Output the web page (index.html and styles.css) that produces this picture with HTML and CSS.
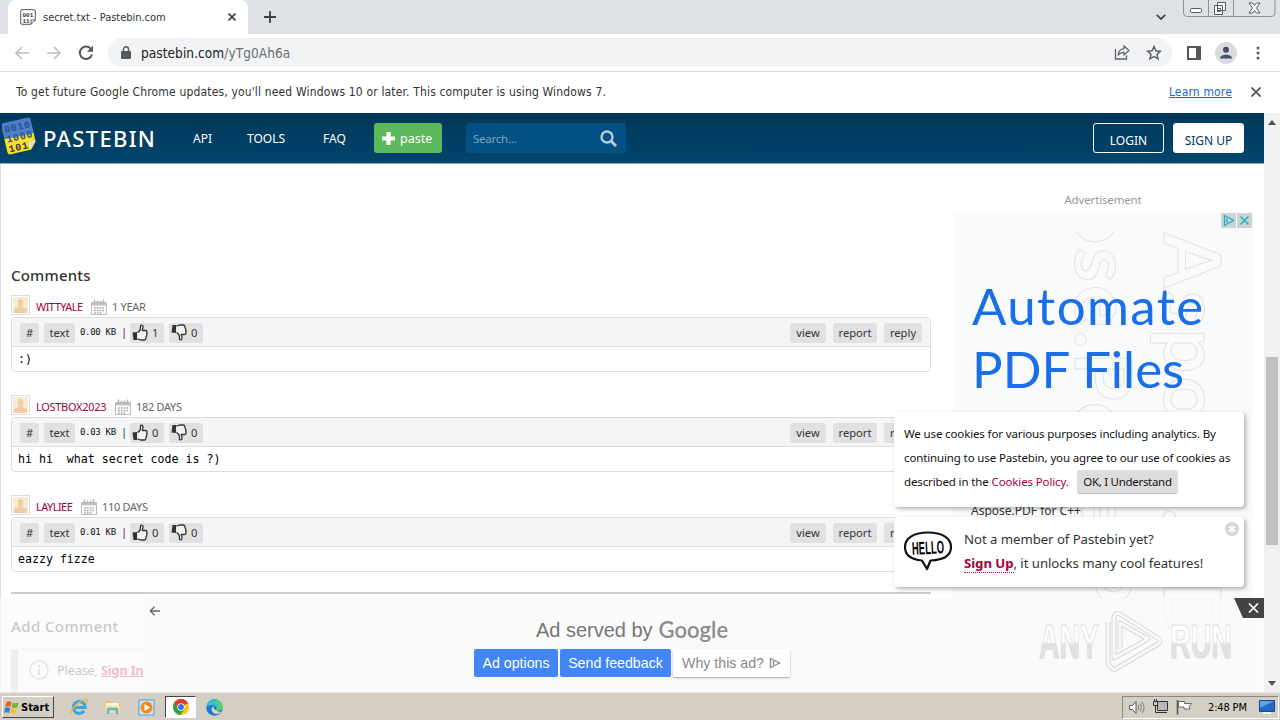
FILE: index.html
```
<!DOCTYPE html>
<html lang="en">
  <head>
    <meta charset="UTF-8" />
    <meta name="viewport" content="width=device-width, initial-scale=1.0" />
    <title>secret.txt - Pastebin.com</title>
    <link rel="stylesheet" href="styles.css">
  </head>
  <body>
    <!-- shared icons -->
    <svg class="defs" width="0" height="0">
      <symbol id="i-user" viewBox="0 0 20 20">
        <rect x=".5" y=".5" width="18" height="19" fill="#fff" stroke="#ddd" />
        <rect x="2" y="2" width="15" height="16" fill="#f9ead8" />
        <path d="M9.5 4c-3 0-3.300 3-2.200 5.500L7.800 12 3 14v4h13v-4l-4.500-2 .3-2.500C13 7 12.500 4 9.500 4z" fill="#efcfa2" />
      </symbol>
      <symbol id="i-cal" viewBox="0 0 16 16">
        <path d="M.5 3.500h15v12H.5z" fill="#fff" stroke="#bbb" />
        <path d="M1 4h14v2.500H1z" fill="#c4c4c4" />
        <path d="M3.500.5v5M6.500 1.500v3M9.500 1.500v3M12.500.5v5" stroke="#b5b5b5" stroke-width="1.500" />
        <path d="M3 9h10M3 11.500h10M3 14h8" stroke="#aaa" stroke-width="1.300" stroke-dasharray="1.800 1" />
      </symbol>
      <symbol id="i-up" viewBox="0 0 16 17">
        <path d="M.5 8.500 5 8v8H1.500z" fill="#333" />
        <path d="M5.500 8.500C7.500 7.500 8.500 6 8.500 4V2c0-1.300 2.200-1.300 2.500.3.200 1.500-.4 3-.8 4.200h3.300c1.700 0 1.800 1.500 1.200 2.300.5.800.3 1.700-.2 2.200.4.800.1 1.600-.5 2 .2 1.500-.5 3-2 3H8.500l-3-1.200" fill="#f2f2f2" stroke="#333" stroke-width="1.300" stroke-linejoin="round" />
      </symbol>
    </svg>

    <div class="tabstrip">
      <div class="tab">
        <svg width="16" height="16" viewBox="0 0 16 16">
          <path d="M2 .7h12q1.300 0 1.300 1.300v9L11 15.300H2Q.7 15.300.7 14V2Q.7.7 2 .7zM15 11h-4v4" fill="#fff" stroke="#555" />
          <text x="2.500" y="7.500" class="fav-text">001</text>
          <text x="2.500" y="14" class="fav-text">11</text>
        </svg>
        <span class="tab-title">secret.txt - Pastebin.com</span>
        <svg class="tab-close" width="8" height="8" viewBox="0 0 8 8"><path d="M.5.5l7 7M7.500.5l-7 7" stroke="#3c4043" stroke-width="1.600" /></svg>
      </div>
      <svg class="new-tab" width="12" height="12" viewBox="0 0 12 12"><path d="M6 0v12M0 6h12" stroke="#3c4043" stroke-width="1.800" /></svg>
      <svg class="tab-search" width="10" height="6" viewBox="0 0 10 6"><path d="M.8.8 5 5 9.200.8" fill="none" stroke="#3c4043" stroke-width="1.700" /></svg>
      <svg class="win-buttons" width="93" height="17" viewBox="0 0 93 17">
        <path d="M.5 0v13q0 3.500 3.500 3.500h84.500q3.500 0 3.500-3.500V0M25.500 0v16M50.500 0v16" fill="none" stroke="#8d9198" />
        <rect x="7.500" y="8.500" width="11" height="4" rx="1" fill="#fff" stroke="#555a63" />
        <path d="M34.500 2.500h8v8h-8zM31.500 5.500h8v9h-8z" fill="#fff" stroke="#555a63" />
        <path d="M34.500 8.500h3v3h-3z" fill="none" stroke="#555a63" />
        <path d="M66 3h3.500l2 2.500L73.500 3H77l-3.500 5 3.500 5h-3.500l-2-2.500-2 2.500H66l3.500-5z" fill="#fff" stroke="#555a63" />
      </svg>
    </div>

    <div class="toolbar">
      <svg class="nav-icon" width="16" height="16" viewBox="0 0 16 16"><path d="M15 8H2M8 2 2 8l6 6" fill="none" stroke="#bdbfc2" stroke-width="1.700" /></svg>
      <svg class="nav-icon" width="16" height="16" viewBox="0 0 16 16"><path d="M1 8h13M8 2l6 6-6 6" fill="none" stroke="#bdbfc2" stroke-width="1.700" /></svg>
      <svg class="nav-icon" width="16" height="16" viewBox="0 0 16 16"><path d="M13.300 4.500A6.200 6.200 0 1 0 14 9.500" fill="none" stroke="#54585d" stroke-width="2" /><path d="M15 .8v6H9z" fill="#54585d" /></svg>
      <div class="omnibox">
        <svg width="10" height="13" viewBox="0 0 10 13"><path d="M1 5h8q1 0 1 1v6q0 1-1 1H1q-1 0-1-1V6q0-1 1-1z" fill="#54585d" /><path d="M2.500 5.500V3.300a2.500 2.500 0 0 1 5 0v2.200" fill="none" stroke="#54585d" stroke-width="1.400" /></svg>
        <span class="url">pastebin.com<span>/yTg0Ah6a</span></span>
        <svg class="share" width="16" height="15" viewBox="0 0 16 15"><path d="M1.500 4v10h11v-3.500" fill="none" stroke="#5f6368" stroke-width="1.300" /><path d="M10 1l5 4.500-5 4.500V7.300C7 7.300 5.500 8 4 10.500 4.300 6.500 6 4 10 3.600z" fill="none" stroke="#5f6368" stroke-width="1.200" /></svg>
        <svg width="16" height="16" viewBox="0 0 16 16"><path d="M8 1.500l1.900 4.300 4.600.4-3.500 3.100 1 4.600-4-2.400-4 2.400 1-4.600-3.500-3.100 4.600-.4z" fill="none" stroke="#54585d" stroke-width="1.400" /></svg>
      </div>
      <svg class="panel-icon" width="14" height="14" viewBox="0 0 14 14"><path d="M0 0h14v14H0z" fill="#54585d" /><path d="M2 2h7v10H2z" fill="#fff" /></svg>
      <svg class="avatar" width="22" height="22" viewBox="0 0 22 22"><circle cx="11" cy="11" r="11" fill="#dadce0" /><circle cx="11" cy="7.800" r="3" fill="#46506a" /><path d="M5 16.500c0-5 12-5 12 0z" fill="#46506a" /></svg>
      <svg width="4" height="14" viewBox="0 0 4 14"><circle cx="2" cy="2" r="1.500" fill="#54585d" /><circle cx="2" cy="7" r="1.500" fill="#54585d" /><circle cx="2" cy="12" r="1.500" fill="#54585d" /></svg>
    </div>

    <div class="infobar">
      <span class="info-text">To get future Google Chrome updates, you'll need Windows 10 or later. This computer is using Windows 7.</span>
      <a class="learn">Learn more</a>
      <svg width="10" height="10" viewBox="0 0 10 10"><path d="M.5.5l9 9M9.500.5l-9 9" stroke="#54585d" stroke-width="1.800" /></svg>
    </div>

    <div class="viewport">
      <div class="page">
        <header class="header">
          <svg class="logo" width="35" height="41" viewBox="0 0 35 41">
            <g transform="rotate(-13 17 20)">
              <path d="M5 4h24q3 0 3 3v14H2V7q0-3 3-3z" fill="#4b7fc9" />
              <path d="M2 20h30v9l-6 7H5q-3 0-3-3z" fill="#f7df2b" />
              <path d="M32 28l-7 8v-6q0-2 2-2z" fill="#dfe2e4" />
              <text x="4" y="14" class="logo-bits dim">0010</text>
              <text x="4" y="24" class="logo-bits dim">1000</text>
              <text x="4" y="34" class="logo-bits">101</text>
            </g>
          </svg>
          <span class="brand">PASTEBIN</span>
          <a class="nav-link nav-api">API</a>
          <a class="nav-link nav-tools">TOOLS</a>
          <a class="nav-link nav-faq">FAQ</a>
          <a class="btn-paste"><svg width="13" height="13" viewBox="0 0 13 13"><path d="M6.500 0v13M0 6.500h13" stroke="#fff" stroke-width="4.200" /></svg><span>paste</span></a>
          <div class="search">
            <span>Search...</span>
            <svg width="17" height="17" viewBox="0 0 17 17"><circle cx="7" cy="7" r="5.500" fill="none" stroke="#b5cfdf" stroke-width="2.300" /><path d="M11 11l5 5" stroke="#b5cfdf" stroke-width="2.800" /></svg>
          </div>
          <a class="btn-login">LOGIN</a>
          <a class="btn-signup">SIGN UP</a>
        </header>

        <div class="content">
          <main class="main">
            <h2 class="title">Comments</h2>

            <div class="comment">
              <div class="who"><svg width="20" height="20"><use href="#i-user" /></svg><a class="name n1">WITTYALE</a><svg class="cal" width="16" height="16"><use href="#i-cal" /></svg><span class="age">1 YEAR</span></div>
              <div class="box">
                <div class="bar">
                  <span class="tag hash">#</span><span class="tag lang">text</span><span class="size">0.00 KB</span><span class="sep">|</span>
                  <span class="tag vote"><svg width="16" height="17"><use href="#i-up" /></svg>1</span>
                  <span class="tag vote"><svg class="down" width="16" height="17"><use href="#i-up" /></svg>0</span>
                  <span class="tag view">view</span><span class="tag report">report</span><span class="tag reply">reply</span>
                </div>
                <div class="code">:)</div>
              </div>
            </div>

            <div class="comment">
              <div class="who"><svg width="20" height="20"><use href="#i-user" /></svg><a class="name n2">LOSTBOX2023</a><svg class="cal" width="16" height="16"><use href="#i-cal" /></svg><span class="age">182 DAYS</span></div>
              <div class="box">
                <div class="bar">
                  <span class="tag hash">#</span><span class="tag lang">text</span><span class="size">0.03 KB</span><span class="sep">|</span>
                  <span class="tag vote"><svg width="16" height="17"><use href="#i-up" /></svg>0</span>
                  <span class="tag vote"><svg class="down" width="16" height="17"><use href="#i-up" /></svg>0</span>
                  <span class="tag view">view</span><span class="tag report">report</span><span class="tag reply">reply</span>
                </div>
                <div class="code">hi hi  what secret code is ?)</div>
              </div>
            </div>

            <div class="comment">
              <div class="who"><svg width="20" height="20"><use href="#i-user" /></svg><a class="name n3">LAYLIEE</a><svg class="cal" width="16" height="16"><use href="#i-cal" /></svg><span class="age">110 DAYS</span></div>
              <div class="box">
                <div class="bar">
                  <span class="tag hash">#</span><span class="tag lang">text</span><span class="size">0.01 KB</span><span class="sep">|</span>
                  <span class="tag vote"><svg width="16" height="17"><use href="#i-up" /></svg>0</span>
                  <span class="tag vote"><svg class="down" width="16" height="17"><use href="#i-up" /></svg>0</span>
                  <span class="tag view">view</span><span class="tag report">report</span><span class="tag reply">reply</span>
                </div>
                <div class="code">eazzy fizze</div>
              </div>
            </div>

            <h2 class="title add">Add Comment</h2>
            <div class="notice">
              <svg width="20" height="20" viewBox="0 0 20 20"><circle cx="10" cy="10" r="9" fill="none" stroke="#aaa" stroke-width="1.500" /><path d="M10 8.500V15M10 5v2" stroke="#999" stroke-width="2" /></svg>
              <span>Please, <a>Sign In</a></span>
            </div>
          </main>

          <aside class="side">
            <div class="side-label">Advertisement</div>
            <div class="ad">
              <svg class="ad-art" width="300" height="460" viewBox="0 0 300 460">
                <g class="outline">
                  <text transform="translate(211 20) rotate(90)">Aspose.PD</text>
                  <text transform="translate(122 -14) rotate(90)">ose.Pose.P</text>
                </g>
              </svg>
              <div class="ad-top"></div>
              <div class="ad-marks">
                <svg width="15" height="15" viewBox="0 0 15 15"><path d="M0 0h15v15H0z" fill="#cfd2d4" /><path d="M3.500 2.500v10l9-5zM6 5v5" fill="none" stroke="#1eb1c1" stroke-width="1.300" /></svg>
                <svg width="15" height="15" viewBox="0 0 15 15"><path d="M0 0h15v15H0z" fill="#cfd2d4" /><path d="M3.500 3.500l8 8M11.500 3.500l-8 8" stroke="#1eb1c1" stroke-width="1.600" /></svg>
              </div>
              <div class="ad-head"><span class="wide">Automate</span><br>PDF Files</div>
              <div class="ad-sub">Aspose.PDF for C++</div>
            </div>
          </aside>
        </div>

        <div class="popup cookies">
          <span class="c1">We use cookies for various purposes including analytics. By</span>
          <span class="c2">continuing to use Pastebin, you agree to our use of cookies as</span>
          <div class="c-row"><span class="c3">described in the <a>Cookies Policy</a>.</span><span class="btn-ok">OK, I Understand</span></div>
        </div>

        <div class="popup hello">
          <svg width="50" height="40" viewBox="0 0 50 40">
            <path d="M25 1.500C11 1.500 2 7 2 16c0 8 6 12.500 17 13.500L24 38l3.500-8.500C40 29 48 24.500 48 16 48 7 39 1.500 25 1.500z" fill="#fff" stroke="#111" stroke-width="2.200" stroke-linejoin="round" />
            <text x="9" y="23" class="hello-text" textLength="32" lengthAdjust="spacingAndGlyphs" transform="rotate(-3 25 18)">HELLO</text>
          </svg>
          <div class="hello-msg"><span class="h1">Not a member of Pastebin yet?</span><span class="h2"><a>Sign Up</a>, it unlocks many cool features!</span></div>
          <svg class="hello-x" width="14" height="14" viewBox="0 0 14 14"><circle cx="7" cy="7" r="7" fill="#d6d6d6" /><path d="M4.200 4.200l5.600 5.600M9.800 4.200 4.200 9.800" stroke="#fff" stroke-width="2" /></svg>
        </div>

        <div class="bottom-ad">
          <div class="ad-panel">
            <svg class="ad-back" width="11" height="10" viewBox="0 0 11 10"><path d="M11 5H1.500M5.500.8 1.300 5l4.200 4.200" fill="none" stroke="#666" stroke-width="1.300" /></svg>
            <div class="served"><span>Ad served by</span><b>Google</b></div>
            <div class="ad-buttons">
              <span class="ab opt">Ad options</span><span class="ab fb">Send feedback</span>
              <span class="ab why">Why this ad?<svg width="12" height="12" viewBox="0 0 12 12"><path d="M1.500 1.500v9L10.500 6zM4.500 4v4" fill="none" stroke="#888" stroke-width="1.300" /></svg></span>
            </div>
          </div>
          <svg class="ad-shut" width="30" height="20" viewBox="0 0 30 20"><path d="M0 0h30v20H9z" fill="#444" /><path d="M15 5.500l9 9M24 5.500l-9 9" stroke="#fff" stroke-width="1.700" /></svg>
        </div>

        <svg class="watermark" width="204" height="70" viewBox="0 0 204 70">
          <defs>
            <linearGradient id="wm" x1="0" y1="0" x2="0" y2="1">
              <stop offset=".5" stop-color="#fff" />
              <stop offset=".55" stop-color="#e2e2e2" />
            </linearGradient>
          </defs>
          <text x="4" y="52" textLength="60" lengthAdjust="spacingAndGlyphs">ANY</text>
          <text x="135" y="52" textLength="62" lengthAdjust="spacingAndGlyphs">RUN</text>
          <path d="M73 16v42l6 6 44-26q4-3 0-6L85 8q-6-2-6 4v40l34-19-28-16v26" fill="none" stroke="#d8d8d8" stroke-width="5" stroke-linejoin="round" />
          <path d="M73 16v42l6 6 44-26q4-3 0-6L85 8q-6-2-6 4v40l34-19-28-16v26" fill="none" stroke="#f8f8f8" stroke-width="3" stroke-linejoin="round" />
        </svg>
      </div>

      <div class="scrollbar">
        <svg width="8" height="5" viewBox="0 0 8 5"><path d="M4 0l4 5H0z" fill="#505050" /></svg>
        <div class="track"><div class="thumb"></div></div>
        <svg width="8" height="5" viewBox="0 0 8 5"><path d="M4 5l4-5H0z" fill="#505050" /></svg>
      </div>
    </div>

    <div class="taskbar">
      <div class="start">
        <svg width="16" height="15" viewBox="0 0 16 15"><path d="M2.500 2Q5 .5 7.500 2L6.500 7Q4 5.500 1.200 7z" fill="#e8622c" /><path d="M8.500 2.500q3 1.500 6 0l-1.200 5q-3 1.200-5.800 0z" fill="#79b82c" /><path d="M1 8q2.500-1.500 5.300 0L5 13Q2.500 11.500 0 13z" fill="#2c83d8" /><path d="M7.200 8.500q3 1.300 5.800 0l-1.200 4.700q-3 1.300-5.800 0z" fill="#f5c321" /></svg>
        <span>Start</span>
      </div>
      <svg class="t-ie" width="18" height="18" viewBox="0 0 18 18"><path d="M3.500 9.500h11.700A6 6 0 1 0 14 13" fill="none" stroke="#35a6e4" stroke-width="3" /><path d="M1 16C-1 12 14-1 17 2c1 1-.5 3-1 4" fill="none" stroke="#e6bd34" stroke-width="1.400" /></svg>
      <svg class="t-folder" width="17" height="16" viewBox="0 0 17 16"><path d="M1 2h6l1 2h8v10H1z" fill="#e9c45a" /><path d="M2 4h13v5H2z" fill="#fdf5cb" /><path d="M1 7h15v7H1z" fill="#f7dd83" /><path d="M4 15v-4q0-1 1-1h7q1 0 1 1v4" fill="none" stroke="#62b1e0" stroke-width="2.500" /></svg>
      <svg class="t-media" width="17" height="17" viewBox="0 0 17 17"><path d="M1 1h15v15H1z" fill="#cfe4f5" stroke="#529fcf" /><circle cx="8.500" cy="8.500" r="6" fill="#f28a18" /><path d="M6.500 5v7l5.500-3.500z" fill="#fff" /></svg>
      <div class="t-active">
        <svg width="16" height="16" viewBox="0 0 16 16"><circle cx="8" cy="8" r="8" fill="#fbc116" /><path d="M8 8 1.100 4A8 8 0 0 1 14.900 4z" fill="#e33b2e" /><path d="M8 8 1.100 4A8 8 0 0 0 7.500 16l4-6z" fill="#2ba24c" /><path d="M1.100 4 5 10l3-5.600h6.900A8 8 0 0 0 1.100 4z" fill="#e33b2e" /><circle cx="8" cy="8" r="3.700" fill="#fff" /><circle cx="8" cy="8" r="2.900" fill="#3478e5" /></svg>
      </div>
      <svg class="t-edge" width="17" height="17" viewBox="0 0 17 17"><circle cx="8.500" cy="8.500" r="8.200" fill="#1479cf" /><path d="M.5 8C1.500-2 16-2 16.700 8c.2 4-5 4.500-6.700 3 2-3-1-5.500-4-5-3 .3-5 1-5.500 2z" fill="#36bfd0" /><path d="M9 1c5-.5 8 4 7.700 7.500-.7 3-4.700 3.500-6.700 2.500 2-2 2-6-1-10z" fill="#5ccf72" /><path d="M10 11c-2-.5-3-2-2-4-4 1-3 8 3 8 2 0 4-1.500 4.500-2.500-2 .5-4 0-5.500-1.500z" fill="#d6d0c7" /></svg>
      <div class="tray">
        <svg width="17" height="15" viewBox="0 0 17 15"><path d="M1.500 5.500h3l3.500-4v12l-3.500-4h-3z" fill="#fff" stroke="#555" /><path d="M10 5q1.500 2.500 0 5M12 3.500q3 4 0 8M14 2q4.200 5.500 0 11" fill="none" stroke="#777" /></svg>
        <svg width="17" height="16" viewBox="0 0 17 16"><path d="M5.500 2.500h10v9h-10z" fill="#b8b8b8" stroke="#333" /><path d="M7 13.500h8M1.500 2.500h4v4h-4zM2.500 0v2M4.500 0v2M3.500 7v6.500h4" fill="none" stroke="#333" /></svg>
        <svg width="17" height="16" viewBox="0 0 17 16"><path d="M1.500 1v14.500" stroke="#555" stroke-width="1.600" /><path d="M2.500 2.500h6v2h7l-2.500 3 1 2.500H8V8H2.500z" fill="#fff" stroke="#666" /></svg>
        <span class="clock">2:48 PM</span>
        <svg class="desk" width="16" height="14" viewBox="0 0 16 14"><path d="M.5.5h15v11H.5z" fill="#2468c8" stroke="#234680" /><path d="M1 1h14L1 8z" fill="#5ba0ec" /><path d="M4 13h8" stroke="#fff" stroke-width="1.500" /></svg>
      </div>
    </div>
  </body>
</html>
```
FILE: styles.css
```
* {
  box-sizing: border-box;
}
body {
  margin: 0;
  width: 1280px;
  height: 720px;
  overflow: hidden;
  display: flex;
  flex-direction: column;
  background: #fff;
  font-family: "Noto Sans", sans-serif;
  color: #333;
  white-space: nowrap;
}
svg {
  flex: none;
  display: block;
}
.defs {
  position: absolute;
}

/* browser */
.tabstrip {
  height: 34px;
  flex: none;
  display: flex;
  background: #dee1e6;
  padding-left: 8px;
}
.tab {
  width: 240px;
  height: 34px;
  display: flex;
  align-items: center;
  background: #fff;
  border-radius: 8px 8px 0 0;
  padding: 0 12px;
}
.fav-text {
  font: bold 6px "Liberation Mono", monospace;
  fill: #333;
}
.tab-title {
  margin-left: 7px;
  font-family: "DejaVu Sans Condensed", "DejaVu Sans", sans-serif;
  font-stretch: condensed;
  font-size: 11px;
  letter-spacing: -0.03px;
}
.tab-close {
  margin-left: auto;
}
.new-tab {
  margin: 11px 0 0 16px;
}
.tab-search {
  margin: 14px 17px 0 auto;
}
.win-buttons {
  margin-right: 4px;
}
.toolbar {
  height: 38px;
  flex: none;
  display: flex;
  align-items: center;
  padding: 0 20px 0 14px;
  border-bottom: 1px solid #dadce0;
}
.nav-icon {
  margin-right: 16px;
}
.omnibox {
  width: 1064px;
  height: 29px;
  margin-left: -2px;
  display: flex;
  align-items: center;
  padding: 0 10px 0 13px;
  border-radius: 15px;
  background: #f1f3f4;
}
.url {
  margin-left: 10px;
  font-family: "DejaVu Sans", sans-serif;
  font-stretch: condensed;
  font-size: 13.5px;
  letter-spacing: 0.08px;
  color: #202124;
}
.url span {
  color: #6b6f74;
}
.share {
  margin: 0 16px 0 auto;
}
.panel-icon {
  margin-left: 15px;
}
.avatar {
  margin: 0 19px 0 14px;
}
.infobar {
  height: 41px;
  flex: none;
  display: flex;
  align-items: center;
  padding: 0 19px 1px 16px;
  font-family: "DejaVu Sans", sans-serif;
  font-stretch: condensed;
  font-size: 12px;
  letter-spacing: 0.16px;
}
.learn {
  margin: 0 19px 0 auto;
  color: #1967d2;
  text-decoration: underline;
}

/* page */
.viewport {
  height: 579px;
  flex: none;
  display: flex;
}
.page {
  position: relative;
  width: 1264px;
  overflow: hidden;
}
.header {
  height: 51px;
  display: flex;
  align-items: center;
  background: linear-gradient(#023859, #02456d);
  border-bottom: 1px solid #8ba9bb;
  color: #fff;
  font-size: 12px;
  padding: 0 20px 0 2px;
}
.logo {
  margin-top: -3px;
}
.logo-bits {
  font: bold 10px "Liberation Mono", monospace;
  letter-spacing: 0.8px;
  fill: #333;
}
.dim {
  fill: #2b4f86;
}
.brand {
  width: 150px;
  margin-left: 6px;
  font-size: 22px;
  font-weight: 500;
  letter-spacing: 1.3px;
}
.nav-link {
  width: 54px;
}
.nav-tools {
  width: 76px;
}
.nav-faq {
  width: 51px;
}
.btn-paste {
  width: 68px;
  height: 30px;
  display: flex;
  align-items: center;
  padding-left: 8px;
  gap: 5px;
  background: #5cb85c;
  border-radius: 3px;
  font-size: 12.5px;
}
.search {
  width: 160px;
  height: 30px;
  margin-left: 24px;
  padding: 0 9px 0 7px;
  display: flex;
  align-items: center;
  justify-content: space-between;
  background: #035184;
  border-radius: 3px;
  font-size: 11.5px;
  letter-spacing: -0.25px;
  color: #7fa3ba;
}
.btn-login,
.btn-signup {
  width: 71px;
  height: 30px;
  display: flex;
  align-items: center;
  justify-content: center;
  padding-top: 4px;
  border: 1px solid #fff;
  border-radius: 3px;
}
.btn-login {
  margin: 0 9px 0 auto;
}
.btn-signup {
  background: #fff;
  color: #023859;
}
.content {
  display: flex;
  height: 540px;
  border-left: 1px solid #ddd;
  padding-left: 10px;
}
.main {
  width: 920px;
  padding-top: 99px;
}
.title {
  margin: 0 0 8px;
  height: 24px;
  line-height: 24px;
  font-size: 15px;
  font-weight: 500;
  letter-spacing: 0.2px;
}
.comment {
  height: 100px;
}
.who {
  height: 22px;
  display: flex;
  font-size: 11px;
  line-height: 23px;
}
.name {
  margin: 0 8px 0 5px;
  color: #a8003b;
}
.n1,
.n2,
.n3 {
  width: 47px;
  letter-spacing: -0.55px;
}
.n2 {
  width: 71px;
  letter-spacing: -0.3px;
}
.n3 {
  width: 37px;
}
.cal {
  margin: 4px 5px 0 0;
}
.age {
  color: #666;
  letter-spacing: -0.3px;
}
.box {
  height: 55px;
  border: 1px solid #ddd;
  border-radius: 4px;
  overflow: hidden;
}
.bar {
  height: 29px;
  display: flex;
  align-items: center;
  padding: 0 8px;
  background: #f5f5f5;
  border-bottom: 1px solid #ddd;
  font-size: 11.2px;
}
.tag {
  height: 20px;
  display: flex;
  align-items: center;
  justify-content: center;
  background: #e1e1e1;
  border-radius: 3px;
  margin-top: 1px;
}
.hash {
  width: 19px;
}
.lang {
  width: 31px;
  margin-left: 5px;
}
.size {
  margin-left: 5px;
  width: 41px;
  font-family: "DejaVu Sans Mono", monospace;
  font-size: 9px;
  letter-spacing: -0.3px;
  color: #111;
}
.sep {
  width: 9px;
  margin-top: -2px;
}
.vote {
  width: 34px;
  margin-right: 5px;
  padding-left: 2px;
  gap: 4px;
  justify-content: flex-start;
}
.down {
  transform: scaleY(-1);
}
.view {
  width: 36px;
  margin-left: auto;
}
.report {
  width: 44px;
  margin: 1px 7px 0;
}
.reply {
  width: 38px;
}
.code {
  padding: 0 6px;
  font-family: "DejaVu Sans Mono", monospace;
  font-size: 11.6px;
  line-height: 25px;
  color: #000;
  white-space: pre;
}
.add {
  margin-top: -3px;
  padding-top: 18px;
  height: 57px;
  border-top: 2px solid #ccc;
  line-height: 28px;
  letter-spacing: 0.4px;
}
.notice {
  height: 43px;
  margin-top: -8px;
  padding: 0 0 1px 11px;
  display: flex;
  align-items: center;
  gap: 8px;
  background: #fff;
  border: 1px solid #ddd;
  border-left: 7px solid #ccc;
  font-size: 12.6px;
  letter-spacing: -0.1px;
}
.notice a {
  color: #c03;
  font-weight: bold;
  text-decoration: underline;
}

/* sidebar */
.side {
  width: 300px;
  margin-left: 22px;
  padding-top: 27px;
}
.side-label {
  height: 22px;
  font-size: 11.5px;
  letter-spacing: -0.15px;
  line-height: 18px;
  color: #999;
  text-align: center;
}
.ad {
  position: relative;
  height: 480px;
  background: linear-gradient(#f9fafc 199px, #fafafa 199px);
  overflow: hidden;
}
.ad-art,
.ad-top {
  position: absolute;
  top: 0;
  left: 0;
}
.ad-top {
  width: 300px;
  height: 19px;
  background: #f9fafc;
}
.outline {
  font: 79px Lato, sans-serif;
  font-weight: bold;
  letter-spacing: 3px;
  fill: none;
  stroke: #e2e3e5;
}
.ad-marks {
  position: absolute;
  top: 0;
  right: 1px;
  display: flex;
  gap: 1px;
}
.ad-head {
  position: relative;
  padding: 61px 0 0 19px;
  font-family: Lato, sans-serif;
  font-size: 51px;
  line-height: 63px;
  color: #1a6fe8;
}
.wide {
  letter-spacing: 1.4px;
}
.ad-sub {
  position: relative;
  margin: 102px 0 0 18px;
  font-size: 12px;
}

/* popups */
.popup {
  position: absolute;
  left: 894px;
  width: 350px;
  background: #fff;
  border-radius: 4px;
  box-shadow: 2px 2px 4px rgba(0, 0, 0, 0.3);
}
.popup a {
  color: #a8003b;
}
.cookies {
  top: 299px;
  height: 95px;
  padding: 10px;
  display: flex;
  flex-direction: column;
  font-size: 11.5px;
  letter-spacing: -0.13px;
  line-height: 24px;
  color: #111;
}
.c-row {
  display: flex;
}
.c3 {
  width: 167px;
}
.btn-ok {
  width: 101px;
  height: 24px;
  margin-left: 6px;
  letter-spacing: -0.3px;
  text-align: center;
  background: #ddd;
  border-bottom: 1px solid #bbb;
  border-radius: 3px;
}
.hello {
  top: 404px;
  height: 70px;
  padding: 11px 9px;
  display: flex;
}
.hello-text {
  font: bold 18px "Liberation Sans", sans-serif;
}
.hello-msg {
  display: flex;
  flex-direction: column;
  margin: -1px 0 0 11px;
  font-size: 13.2px;
  letter-spacing: -0.05px;
  line-height: 24px;
}
.hello > svg {
  margin-top: 3px;
}
.hello-msg a {
  font-weight: bold;
  border-bottom: 1px dotted #a8003b;
}
.hello .hello-x {
  position: absolute;
  top: 2px;
  right: 5px;
}

/* bottom ad */
.bottom-ad {
  position: absolute;
  left: 0;
  top: 485px;
  width: 1264px;
  height: 94px;
  padding-left: 144px;
  background: rgba(250, 250, 250, 0.75);
}
.ad-panel {
  width: 976px;
  height: 94px;
  padding-top: 19px;
  display: flex;
  flex-direction: column;
  align-items: center;
  background: #fafafa;
  font-family: "Liberation Sans", sans-serif;
}
.ad-back {
  position: absolute;
  left: 149px;
  top: 8px;
}
.ad-shut {
  position: absolute;
  right: 0;
  top: 0;
}
.served {
  display: flex;
  height: 32px;
  gap: 6px;
  font-size: 20px;
  line-height: 26px;
  color: #777;
}
.served b {
  font-family: Lato, sans-serif;
  font-size: 22px;
  font-weight: 600;
  color: #8c8c8c;
}
.ad-buttons {
  display: flex;
  gap: 2px;
}
.ab {
  height: 28px;
  display: flex;
  align-items: center;
  justify-content: center;
  background: #4285f4;
  border-radius: 2px;
  color: #fff;
  font-size: 14.2px;
}
.opt {
  width: 84px;
}
.fb {
  width: 111px;
}
.why {
  width: 117px;
  gap: 5px;
  background: #fff;
  color: #888;
  box-shadow: 0 1px 2px rgba(0, 0, 0, 0.35);
}
.watermark {
  position: absolute;
  left: 1035px;
  top: 493px;
}
.watermark text {
  font: bold 48px "Liberation Sans", sans-serif;
  fill: url(#wm);
  stroke: #dcdcdc;
}

.scrollbar {
  width: 16px;
  display: flex;
  flex-direction: column;
  align-items: center;
  justify-content: space-between;
  padding: 7px 0 6px;
  background: #f1f1f1;
}
.track {
  height: 545px;
  padding-top: 226px;
}
.thumb {
  width: 12px;
  height: 188px;
  background: #c1c1c1;
}

/* taskbar */
.taskbar {
  height: 28px;
  flex: none;
  display: flex;
  align-items: center;
  background: #d4cec5;
  border-top: 1px solid #eeebe5;
  padding: 1px 1px 0 2px;
}
.start {
  width: 52px;
  height: 22px;
  display: flex;
  align-items: center;
  gap: 1px;
  padding-left: 1px;
  border: 1px solid;
  border-color: #fff #444 #444 #fff;
  font: bold 11px "DejaVu Sans", sans-serif;
  font-stretch: condensed;
  color: #000;
}
.t-ie {
  margin-left: 16px;
}
.t-folder {
  margin-left: 16px;
}
.t-media {
  margin-left: 17px;
}
.t-active {
  width: 31px;
  height: 22px;
  margin-left: 10px;
  display: flex;
  align-items: center;
  justify-content: center;
  background: #fff;
  border: 1px solid;
  border-color: #444 #fff #fff #444;
}
.t-edge {
  margin-left: 10px;
}
.tray {
  width: 157px;
  height: 23px;
  margin-left: auto;
  display: flex;
  align-items: center;
  gap: 7px;
  padding-left: 5px;
  border: 1px solid;
  border-color: #888 #fff #fff #888;
}
.clock {
  width: 42px;
  margin-left: 8px;
  font-family: "DejaVu Sans", sans-serif;
  font-stretch: condensed;
  font-size: 11px;
  letter-spacing: -0.15px;
  color: #000;
}
.desk {
  margin-left: 2px;
}
```
